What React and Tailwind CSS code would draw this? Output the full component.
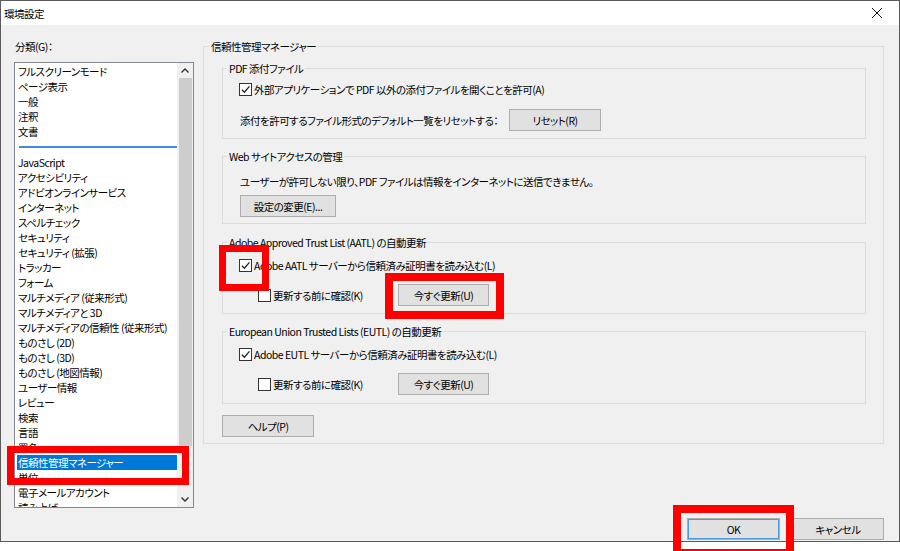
import React from "react";

const FONT = "font-['Meiryo_UI','Noto_Sans_CJK_JP',sans-serif] [font-feature-settings:'palt']";

const TOP_ITEMS = ["フルスクリーンモード", "ページ表示", "一般", "注釈", "文書"];
const ITEMS = [
  "JavaScript",
  "アクセシビリティ",
  "アドビオンラインサービス",
  "インターネット",
  "スペルチェック",
  "セキュリティ",
  "セキュリティ (拡張)",
  "トラッカー",
  "フォーム",
  "マルチメディア (従来形式)",
  "マルチメディアと 3D",
  "マルチメディアの信頼性 (従来形式)",
  "ものさし (2D)",
  "ものさし (3D)",
  "ものさし (地図情報)",
  "ユーザー情報",
  "レビュー",
  "検索",
  "言語",
  "署名",
  "信頼性管理マネージャー",
  "単位",
  "電子メールアカウント",
  "読み上げ",
];

function Box({ checked }) {
  return (
    <span className="w-[13px] h-[13px] border border-[#333] bg-white flex items-center justify-center shrink-0">
      {checked && (
        <svg width="11" height="11" viewBox="0 0 11 11">
          <path d="M1.8 5.6 L4.4 8.2 L9.4 2.4" stroke="#222" strokeWidth="1.3" fill="none" />
        </svg>
      )}
    </span>
  );
}

function Button({ children, className = "" }) {
  return (
    <div
      className={`h-[22px] bg-[#e1e1e1] border border-[#adadad] flex items-center justify-center shrink-0 ${className}`}
    >
      {children}
    </div>
  );
}

// Windows group box: border with a caption sitting on the top line
function Group({ title, className = "", legendLeft = "left-[4px]", children }) {
  return (
    <div className={`relative border border-[#dcdcdc] ${className}`}>
      <span className={`absolute -top-[8px] ${legendLeft} px-[2px] bg-[#f0f0f0] leading-[15px] whitespace-nowrap`}>
        {title}
      </span>
      {children}
    </div>
  );
}

function Check({ checked, children }) {
  return (
    <div className="flex items-center h-[15px] gap-[2px] whitespace-nowrap">
      <Box checked={checked} />
      <span>{children}</span>
    </div>
  );
}

function TrustGroup({ title, label, className }) {
  return (
    <Group title={title} className={`pt-[15px] pl-[16px] ${className}`}>
      <Check checked>{label}</Check>
      <div className="mt-[11px] ml-[19px] flex items-center h-[22px]">
        <div className="w-[140px]">
          <Check>更新する前に確認(K)</Check>
        </div>
        <Button className="w-[91px]">今すぐ更新(U)</Button>
      </div>
    </Group>
  );
}

export default function App() {
  return (
    <div
      className={`w-[900px] h-[551px] bg-white relative overflow-hidden text-[10.5px] tracking-[-0.5px] leading-[15px] text-black ${FONT}`}
    >
      <div className="w-[900px] h-[542px] border border-[#5a5a5a] flex flex-col">
        {/* Title bar */}
        <div className="h-[24px] bg-white flex items-center justify-between pl-[3px] pr-[16px]">
          <span>環境設定</span>
          <svg width="12" height="12" viewBox="0 0 12 12">
            <path d="M1 1 L11 11 M11 1 L1 11" stroke="#111" strokeWidth="1" />
          </svg>
        </div>

        {/* Body */}
        <div className="flex-1 bg-[#f0f0f0] flex flex-col">
          <div className="flex pl-[13px]">
            {/* Category list */}
            <div className="w-[180px] flex flex-col">
              <div className="mt-[14px] pl-[1px] h-[15px]">分類(G)：</div>
              <div className="mt-[8px] h-[446px] bg-white border border-[#828790] flex overflow-hidden">
                <div className="flex-1 pt-[1px] pl-[2px] overflow-hidden">
                  {TOP_ITEMS.map((t) => (
                    <div key={t} className="h-[15px] pl-[1px] whitespace-nowrap">
                      {t}
                    </div>
                  ))}
                  <div className="h-[16px] flex items-center pl-[2px]">
                    <div className="w-full h-[2px] bg-[#3d8ee0]" />
                  </div>
                  {ITEMS.map((t) => (
                    <div
                      key={t}
                      className={`h-[15px] pl-[1px] whitespace-nowrap ${
                        t === "信頼性管理マネージャー" ? "bg-[#0078d7] text-white" : ""
                      }`}
                    >
                      {t}
                    </div>
                  ))}
                </div>
                {/* Scrollbar */}
                <div className="w-[16px] bg-[#f0f0f0] flex flex-col items-center">
                  <div className="h-[15px] flex items-center justify-center">
                    <svg width="8" height="5" viewBox="0 0 8 5">
                      <path d="M0.5 4.5 L4 1 L7.5 4.5" stroke="#333" strokeWidth="1.4" fill="none" />
                    </svg>
                  </div>
                  <div className="w-[13px] h-[368px] bg-[#cdcdcd]" />
                  <div className="flex-1" />
                  <div className="h-[15px] flex items-center justify-center">
                    <svg width="8" height="5" viewBox="0 0 8 5">
                      <path d="M0.5 0.5 L4 4 L7.5 0.5" stroke="#333" strokeWidth="1.4" fill="none" />
                    </svg>
                  </div>
                </div>
              </div>
            </div>

            {/* Trust manager panel */}
            <Group
              title="信頼性管理マネージャー"
              legendLeft="left-[5px]"
              className="ml-[9px] mt-[21px] w-[681px] h-[398px] pt-[21px] pl-[18px] pr-[17px]"
            >
              <Group title="PDF 添付ファイル" className="h-[71px] pt-[13px] pl-[16px]">
                <Check checked>外部アプリケーションで PDF 以外の添付ファイルを開くことを許可(A)</Check>
                <div className="mt-[12px] flex items-center h-[22px] pl-[1px]">
                  <div className="w-[269px] whitespace-nowrap">添付を許可するファイル形式のデフォルト一覧をリセットする：</div>
                  <Button className="w-[92px]">リセット(R)</Button>
                </div>
              </Group>

              <Group title="Web サイトアクセスの管理" className="mt-[17px] h-[68px] pt-[17px] pl-[17px]">
                <div className="h-[15px] whitespace-nowrap">
                  ユーザーが許可しない限り、PDF ファイルは情報をインターネットに送信できません。
                </div>
                <Button className="mt-[6px] w-[96px]">設定の変更(E)...</Button>
              </Group>

              <TrustGroup
                title="Adobe Approved Trust List (AATL) の自動更新"
                label="Adobe AATL サーバーから信頼済み証明書を読み込む(L)"
                className="mt-[18px] h-[72px]"
              />

              <TrustGroup
                title="European Union Trusted Lists (EUTL) の自動更新"
                label="Adobe EUTL サーバーから信頼済み証明書を読み込む(L)"
                className="mt-[17px] h-[73px]"
              />

              <Button className="mt-[11px] w-[92px]">ヘルプ(P)</Button>
            </Group>
          </div>

          <div className="mt-auto mb-[1px] flex justify-end gap-[12px] pr-[15px]">
            <Button className="w-[93px] border-[#0078d7] shadow-[inset_0_0_0_1px_#4a9be0]">OK</Button>
            <Button className="w-[92px]">キャンセル</Button>
          </div>
        </div>
      </div>

      {/* Red annotation boxes */}
      <div className="absolute left-[7px] top-[446px] w-[182px] h-[39px] border-[7px] border-[#ff0000]" />
      <div className="absolute left-[219px] top-[245px] w-[50px] h-[46px] border-[7px] border-[#ff0000]" />
      <div className="absolute left-[385px] top-[273px] w-[119px] h-[46px] border-[8px] border-[#ff0000]" />
      <div className="absolute left-[673px] top-[505px] w-[121px] h-[52px] border-[8px] border-[#ff0000]" />
    </div>
  );
}
